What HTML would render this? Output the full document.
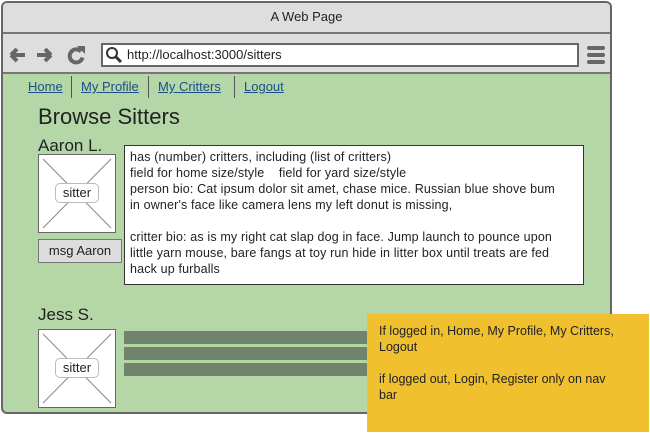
<!DOCTYPE html>
<html><head><style>
*{margin:0;padding:0;box-sizing:border-box}
body{width:650px;height:436px;background:#fff;position:relative;overflow:hidden;font-family:"Liberation Sans",sans-serif;color:#222}
.a{position:absolute}
.win{left:1px;top:1px;width:611px;height:413px;border:2px solid #666;border-radius:6px;background:#b5d6a7;overflow:hidden}
.title{left:0;top:0;width:100%;height:31px;background:#dedede;border-bottom:2px solid #777;text-align:center;font-size:13px;line-height:27px}
.tool{left:0;top:31px;width:100%;height:40px;background:#dedede;border-bottom:2px solid #777}
.url{left:98px;top:9px;width:478px;height:24px;background:#fff;border:2px solid #666;font-size:13px;line-height:20px;padding-left:24px}
.nav{top:79px;font-size:13px;color:#1a4f8a;text-decoration:underline}
.sep{top:76px;width:1px;height:22px;background:#555}
.img{width:78px;height:79px;background:#fff;border:1px solid #666}
.lbl{left:16px;top:28px;width:44px;height:20px;border:1px solid #bbb;border-radius:5px;background:#fff;font-size:13px;text-align:center;line-height:18px}
.bar{left:124px;width:260px;height:13px;background:#72836d}
</style></head><body>
<div class="a win">
 <div class="a title">A Web Page</div>
 <div class="a tool">
  <svg class="a" style="left:5px;top:9px" width="82" height="24">
   <path d="M3 12h14M3 12l6-6M3 12l6 6" stroke="#666" stroke-width="4" fill="none" stroke-linejoin="round"/>
   <path d="M29 12h14M43 12l-6-6M43 12l-6 6" stroke="#666" stroke-width="4" fill="none" stroke-linejoin="round"/>
   <path d="M73 8.5a6.5 6.5 0 1 0 1.5 6" stroke="#666" stroke-width="4" fill="none"/><path d="M69 3l8 0l0 8z" fill="#666"/>
  </svg>
  <div class="a url">http://localhost:3000/sitters</div>
  <svg class="a" style="left:102px;top:12px" width="18" height="18"><circle cx="7" cy="7" r="5" stroke="#333" stroke-width="2" fill="none"/><path d="M11 11l5 5" stroke="#333" stroke-width="3"/></svg>
  <svg class="a" style="left:584px;top:11px" width="18" height="20"><rect x="0" y="1" width="18" height="4" rx="2" fill="#666"/><rect x="0" y="8" width="18" height="4" rx="2" fill="#666"/><rect x="0" y="15" width="18" height="4" rx="2" fill="#666"/></svg>
 </div>
</div>
<div class="a nav" style="left:28px">Home</div>
<div class="a sep" style="left:71px"></div>
<div class="a nav" style="left:81px">My Profile</div>
<div class="a sep" style="left:148px"></div>
<div class="a nav" style="left:158px">My Critters</div>
<div class="a sep" style="left:234px"></div>
<div class="a nav" style="left:244px">Logout</div>
<div class="a" style="left:38px;top:104px;font-size:22px">Browse Sitters</div>
<div class="a" style="left:38px;top:136px;font-size:17px">Aaron L.</div>
<div class="a img" style="left:38px;top:154px"><svg class="a" width="76" height="77"><path d="M4 4L72 73M72 4L4 73" stroke="#888" stroke-width="1"/></svg><div class="a lbl">sitter</div></div>
<div class="a" style="left:38px;top:239px;width:84px;height:24px;background:#ddd;border:1px solid #777;font-size:13px;text-align:center;line-height:22px">msg Aaron</div>
<div class="a" style="left:124px;top:145px;width:460px;height:140px;background:#fff;border:1px solid #333;padding:3px 5px;font-size:12.5px;line-height:16px;letter-spacing:0.15px">has (number) critters, including (list of critters)<br>field for home size/style &nbsp;&nbsp; field for yard size/style<br>person bio: Cat ipsum dolor sit amet, chase mice. Russian blue shove bum<br>in owner's face like camera lens my left donut is missing,<br><br>critter bio: as is my right cat slap dog in face. Jump launch to pounce upon<br>little yarn mouse, bare fangs at toy run hide in litter box until treats are fed<br>hack up furballs</div>
<div class="a" style="left:38px;top:305px;font-size:17px">Jess S.</div>
<div class="a img" style="left:38px;top:329px"><svg class="a" width="76" height="77"><path d="M4 4L72 73M72 4L4 73" stroke="#888" stroke-width="1"/></svg><div class="a lbl">sitter</div></div>
<div class="a bar" style="top:331px"></div>
<div class="a bar" style="top:347px"></div>
<div class="a bar" style="top:363px"></div>
<div class="a" style="left:367px;top:314px;width:282px;height:118px;background:#f0c02e;padding:9px 12px;font-size:12.5px;line-height:16px">If logged in, Home, My Profile, My Critters,<br>Logout<br><br>if logged out, Login, Register only on nav<br>bar</div>
</body></html>
